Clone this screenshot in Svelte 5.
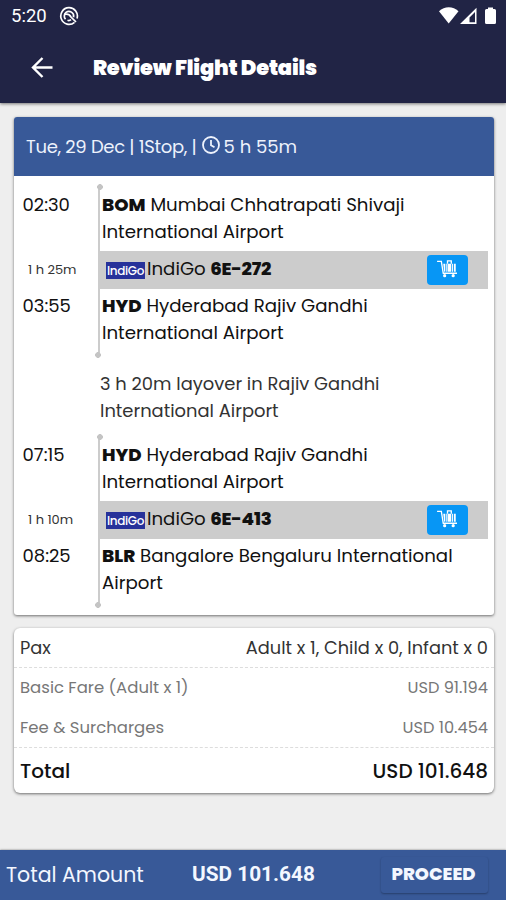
<script lang="ts">
	const segments = [
		{
			departTime: '02:30',
			fromCode: 'BOM',
			from: ['Mumbai Chhatrapati Shivaji', 'International Airport'],
			duration: '1 h 25m',
			flight: '6E-272',
			arriveTime: '03:55',
			toCode: 'HYD',
			to: ['Hyderabad Rajiv Gandhi', 'International Airport'],
			layover: ['3 h 20m layover in Rajiv Gandhi', 'International Airport']
		},
		{
			departTime: '07:15',
			fromCode: 'HYD',
			from: ['Hyderabad Rajiv Gandhi', 'International Airport'],
			duration: '1 h 10m',
			flight: '6E-413',
			arriveTime: '08:25',
			toCode: 'BLR',
			to: ['Bangalore Bengaluru International', 'Airport'],
			layover: null
		}
	];

	const fares = [
		{ label: 'Basic Fare (Adult x 1)', amount: 'USD 91.194' },
		{ label: 'Fee & Surcharges', amount: 'USD 10.454' }
	];
</script>

<div class="screen">
	<header>
		<div class="status">
			<span class="clock">5:20</span>
			<svg class="dnd" width="20" height="20" viewBox="0 0 20 20">
				<path d="M15.500 16.300A8.300 8.300 0 1 1 18 12.500" />
				<path d="M6.500 13.200A4.700 4.700 0 0 1 7 6.400a4.700 4.700 0 0 1 7.500 4.800" />
				<path d="M5.500 8.500c3-1 5 0 6.500 2.500l5 5" />
				<path d="M8.500 14.300c1.500.5 2.500.2 3.500-.6" />
			</svg>
			<svg class="signals" width="58" height="18" viewBox="0 0 58 18">
				<path d="M0 4.2C5.5-1.1 14-1.1 19.5 4.2L9.7 16.5Z" />
				<path fill-rule="evenodd" d="M37.5.8V17H21ZM36 5l-5.500 5.500V15.200H36Z" />
				<path d="M49 .5h5V2h1.5q1.5 0 1.5 1.5v12q0 1.5-1.5 1.5h-8Q46 17 46 15.500v-12Q46 2 47.500 2H49Z" />
			</svg>
		</div>
		<div class="titlebar">
			<svg class="back" width="22" height="22" viewBox="0 0 22 22">
				<path d="M21.500 10.500H2M11.500 1 2 10.500l9.500 9.500" />
			</svg>
			<h1>Review Flight Details</h1>
		</div>
	</header>

	<main>
		<section class="card trip">
			<div class="trip-head">
				<span class="date">Tue, 29 Dec | 1Stop, |</span>
				<svg width="18" height="18" viewBox="0 0 18 18">
					<circle cx="9" cy="9" r="8" />
					<path d="M9 4v5.300l3.500 2" />
				</svg>
				<span class="total-time">5 h 55m</span>
			</div>
			<div class="trip-body">
				{#each segments as segment (segment.flight)}
					<div class="segment">
						<div class="time">{segment.departTime}</div>
						<div class="airport">
							<b>{segment.fromCode}</b> {segment.from[0]}<br />{segment.from[1]}
						</div>
						<div class="duration">{segment.duration}</div>
						<div class="flight">
							<span class="logo">IndiGo</span>
							<span class="carrier">IndiGo</span>
							<b>{segment.flight}</b>
							<button class="baggage" aria-label="Baggage">
								<svg width="21" height="18" viewBox="0 0 22 19">
									<path class="cart" d="M0 1.500h4.500l2 12.500H21" />
									<path class="cart" d="M11 4V1h4v3" />
									<path d="M6.500 4h2v8.500h-1Zm2.700 0h1v8.500h-1Zm1.800 0h4v8.500h-4Zm4.800 0h1v8.500h-1Zm1.900 0h2v8.500h-2Z" />
									<circle cx="8" cy="16.500" r="1.700" />
									<circle cx="17" cy="16.500" r="1.700" />
								</svg>
							</button>
						</div>
						<div class="time">{segment.arriveTime}</div>
						<div class="airport">
							<b>{segment.toCode}</b> {segment.to[0]}<br />{segment.to[1]}
						</div>
					</div>
					{#if segment.layover}
						<div class="layover">{segment.layover[0]}<br />{segment.layover[1]}</div>
					{/if}
				{/each}
			</div>
		</section>

		<section class="card fare">
			<div class="row pax">
				<span>Pax</span>
				<span class="people">Adult x 1, Child x 0, Infant x 0</span>
			</div>
			<div class="items">
				{#each fares as fare (fare.label)}
					<div class="row item">
						<span>{fare.label}</span>
						<span class="amount">{fare.amount}</span>
					</div>
				{/each}
			</div>
			<div class="row total">
				<span>Total</span>
				<span class="amount">USD 101.648</span>
			</div>
		</section>
	</main>

	<footer>
		<span class="label">Total Amount</span>
		<span class="sum">USD 101.648</span>
		<button class="proceed">PROCEED</button>
	</footer>
</div>

<style>
	:global(body) {
		background: #eee;
	}

	.screen {
		height: 900px;
		display: flex;
		flex-direction: column;
		font-family: Poppins, Inter, 'Open Sans', sans-serif;
		color: #111;
		white-space: nowrap;
		overflow: hidden;
	}

	header {
		height: 103px;
		background: #212445;
		color: #fff;
		box-shadow: 0 1px 3px rgba(0, 0, 0, 0.5);
	}

	.status {
		height: 32px;
		padding: 0 9px 0 11px;
		display: flex;
		align-items: center;
	}

	.clock {
		font-family: Roboto, sans-serif;
		font-size: 18.5px;
		width: 48px;
	}

	.dnd {
		fill: none;
		stroke: #fff;
		stroke-width: 1.7;
	}

	.signals {
		margin-left: auto;
		fill: #fff;
	}

	.titlebar {
		height: 71px;
		padding-left: 31px;
		display: flex;
		align-items: center;
	}

	.back {
		fill: none;
		stroke: #fff;
		stroke-width: 2.4;
	}

	h1 {
		margin: 0 0 0 40px;
		font-size: 21px;
		font-weight: 900;
		letter-spacing: -0.2px;
	}

	main {
		flex: 1;
		padding: 14px 12px 0 14px;
	}

	.card {
		background: #fff;
		border-radius: 3px;
		box-shadow: 0 1px 3px rgba(0, 0, 0, 0.55);
		overflow: hidden;
	}

	.trip {
		height: 498px;
	}

	.trip-head {
		height: 58px;
		padding: 0 0 1px 12px;
		display: flex;
		align-items: center;
		background: #385998;
		color: #edf2fc;
		font-size: 18px;
		letter-spacing: -0.3px;
	}

	.trip-head svg {
		margin: -3px 4px 0 5px;
		fill: none;
		stroke: #edf2fc;
		stroke-width: 1.8;
	}

	.total-time {
		letter-spacing: 0;
	}

	.trip-body {
		padding: 10.5px 6px 0 9px;
	}

	.segment {
		position: relative;
		height: 168.5px;
		padding-top: 5.5px;
		box-sizing: border-box;
		display: grid;
		grid-template-columns: 75px 1fr;
		grid-template-rows: 58.5px 38.5px 1fr;
		font-size: 18.2px;
		line-height: 26.5px;
	}

	.segment::before {
		content: '';
		position: absolute;
		left: 74.5px;
		top: 0;
		bottom: 0;
		width: 2px;
		background: #ccc;
	}

	.segment::after {
		content: '';
		position: absolute;
		left: 72px;
		top: -3px;
		bottom: -3px;
		width: 8px;
		background:
			radial-gradient(circle at center, #c4c4c4 2.6px, transparent 3.1px) 100% 0 / 6px 6px no-repeat,
			radial-gradient(circle at center, #c4c4c4 2.6px, transparent 3.1px) 0 100% / 6px 6px no-repeat;
	}

	.time {
		font-size: 18px;
		text-indent: -0.5px;
	}

	.airport {
		padding-left: 4px;
	}

	.segment > .time:nth-child(5),
	.segment > .airport:nth-child(6) {
		padding-top: 4px;
	}

	.airport b,
	.flight b {
		font-weight: 800;
	}

	.duration {
		align-self: center;
		padding-left: 5px;
		font-size: 13px;
		color: #333;
	}

	.flight {
		padding: 0 20px 0 8px;
		display: flex;
		align-items: center;
		background: #ccc;
	}

	.logo {
		width: 39px;
		height: 17px;
		margin: 1px 2px 0 0;
		background: #27329a;
		color: #fff;
		font-size: 12px;
		font-weight: 500;
		line-height: 18px;
		letter-spacing: -0.4px;
		text-align: center;
	}

	.carrier,
	.flight b {
		margin-top: -2px;
	}

	.carrier {
		margin-right: 4.5px;
	}

	.flight b {
		letter-spacing: -0.2px;
	}

	.baggage {
		width: 41px;
		height: 30px;
		margin-left: auto;
		padding: 0;
		display: flex;
		align-items: center;
		justify-content: center;
		border: 0;
		border-radius: 4px;
		background: #0796f5;
	}

	.baggage svg {
		margin-top: -1px;
		fill: #fff;
	}

	.baggage .cart {
		fill: none;
		stroke: #fff;
		stroke-width: 1.4;
	}

	.layover {
		height: 81.5px;
		padding: 16px 0 0 77px;
		box-sizing: border-box;
		font-size: 17.9px;
		line-height: 26.5px;
		color: #333;
	}

	.fare {
		height: 165px;
		margin-top: 13px;
		border-radius: 6px;
	}

	.row {
		padding: 0 6px;
		display: flex;
		align-items: center;
		justify-content: space-between;
	}

	.pax {
		height: 39px;
		font-size: 17.8px;
		color: #333;
	}

	.items {
		border-top: 1px dashed #ddd;
		border-bottom: 1px dashed #ddd;
	}

	.item {
		height: 39.5px;
		font-size: 16.5px;
		color: #777;
	}

	.item .amount {
		font-size: 16.2px;
	}

	.total {
		height: 46px;
		font-size: 20px;
		font-weight: 500;
	}

	footer {
		height: 50px;
		padding: 0 18px 2px 6px;
		box-sizing: border-box;
		display: flex;
		align-items: center;
		background: #385998;
		color: #f3f7ff;
		box-shadow: 0 0 2px rgba(0, 0, 0, 0.5);
	}

	.label {
		width: 186px;
		font-size: 20.5px;
	}

	.sum {
		font-family: Roboto, sans-serif;
		font-size: 20.8px;
		font-weight: 700;
	}

	.proceed {
		width: 107px;
		height: 36px;
		margin: 2px 0 0 auto;
		padding: 0 2px 3px 0;
		border: 0;
		border-radius: 3px;
		background: #385998;
		box-shadow: 0 1px 2px rgba(0, 0, 0, 0.3);
		color: #f3f7ff;
		font-family: inherit;
		font-size: 18px;
		font-weight: 800;
	}
</style>
